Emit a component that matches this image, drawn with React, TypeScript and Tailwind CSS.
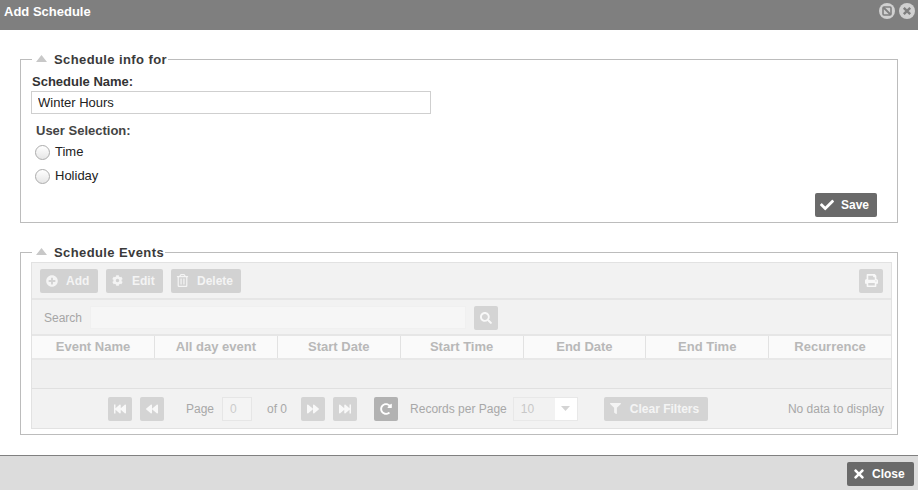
import React from "react";
import {
  FaCheck, FaPlusCircle, FaCog, FaRegTrashAlt, FaPrint, FaSearch, FaFastBackward, FaBackward,
  FaForward, FaFastForward, FaRedoAlt, FaFilter, FaTimes,
} from "react-icons/fa";

function Legend({ children }: { children: React.ReactNode }) {
  return (
    <legend className="ml-[11px] flex items-center pr-[1px] pl-[4px] h-[14px]">
      <svg width="11" height="7" viewBox="0 0 11 7" className="mr-[7px] mt-[-2px]"><path d="M5.5 0L11 7H0z" fill="#c8c8c8" /></svg>
      <span className="text-[13px] tracking-[0.4px] font-bold leading-[14px] text-[#3a3a3a] mt-[2px]">{children}</span>
    </legend>
  );
}

function ToolBtn({ icon, label, width }: { icon: React.ReactNode; label: string; width: string }) {
  return (
    <div className={`${width} h-[24px] rounded-[2px] bg-[#d2d2d2] flex items-center pl-[5px] text-[#f4f4f4]`}>
      <span className="w-[13px] flex justify-center">{icon}</span>
      <span className="ml-[8px] text-[12px] font-bold">{label}</span>
    </div>
  );
}

function PagerBtn({ children, dark }: { children: React.ReactNode; dark?: boolean }) {
  return (
    <div className={`w-[24px] h-[24px] rounded-[2px] flex items-center justify-center ${dark ? "bg-[#b2b2b2] text-white" : "bg-[#d4d4d4] text-[#f8f8f8]"}`}>
      {children}
    </div>
  );
}

const columns = ["Event Name", "All day event", "Start Date", "Start Time", "End Date", "End Time", "Recurrence"];

export default function App() {
  return (
    <div className="w-[918px] h-[490px] bg-white flex flex-col overflow-hidden font-['Liberation_Sans',Arial,sans-serif]">
      <header className="h-[30px] bg-[#7f7f7f] flex items-center justify-between pl-[4px] pr-[3px] pb-[8px] shrink-0">
        <span className="text-white text-[13px] font-bold leading-[16px] mt-[2px]">Add Schedule</span>
        <div className="flex items-center gap-[4px]">
          <svg width="16" height="16" viewBox="0 0 16 16">
            <circle cx="8" cy="8" r="8" fill="#d0d0d0" />
            <rect x="4" y="4" width="8" height="8" rx="1" fill="none" stroke="#7f7f7f" strokeWidth="1.6" />
            <path d="M4.5 4.5L11.5 11.5" stroke="#7f7f7f" strokeWidth="1.8" />
          </svg>
          <svg width="16" height="16" viewBox="0 0 16 16">
            <circle cx="8" cy="8" r="8" fill="#d0d0d0" />
            <path d="M4.8 4.8L11.2 11.2M11.2 4.8L4.8 11.2" stroke="#7f7f7f" strokeWidth="2.4" />
          </svg>
        </div>
      </header>

      <main className="flex-1 px-[20px] pt-[22px] min-h-0">
        <fieldset className="border border-[#bcbcbc] h-[171px] relative block">
          <Legend>Schedule info for</Legend>
          <div className="pl-[10px] pr-[20px]">
            <div className="pl-[1px] text-[13px] font-bold leading-[16px] text-[#333] mt-[8px] mb-[1px]">Schedule Name:</div>
            <input readOnly value="Winter Hours" className="w-[400px] h-[23px] border border-[#cfcfcf] pl-[6px] text-[13px] text-[#222] outline-none block" />
            <div className="pl-[5px] mt-[9px] text-[13px] font-bold leading-[16px] text-[#444]">User Selection:</div>
            <div className="pl-[4px] mt-[1px] flex items-center h-[24px]">
              <span className="w-[15px] h-[15px] rounded-full border border-[#ababab] bg-gradient-to-b from-[#ffffff] to-[#e6e6e6]" />
              <span className="ml-[5px] text-[13px] text-[#222]">Time</span>
            </div>
            <div className="pl-[4px] flex items-center h-[24px]">
              <span className="w-[15px] h-[15px] rounded-full border border-[#ababab] bg-gradient-to-b from-[#ffffff] to-[#e6e6e6]" />
              <span className="ml-[5px] text-[13px] text-[#222]">Holiday</span>
            </div>
            <div className="flex justify-end mt-[5px]">
              <div className="w-[62px] h-[24px] bg-[#6a6a6a] rounded-[2px] flex items-center pl-[5px] text-white">
                <FaCheck size={14} />
                <span className="ml-[7px] text-[12px] font-bold">Save</span>
              </div>
            </div>
          </div>
        </fieldset>

        <fieldset className="border border-[#bcbcbc] h-[190px] mt-[22px] block">
          <Legend>Schedule Events</Legend>
          <div className="ml-[10px] mr-[5px] mt-[3px] border border-[#e2e2e2] bg-[#f2f2f2] h-[167px] flex flex-col">
            <div className="h-[37px] flex items-center pl-[8px] pr-[8px] border-b-2 border-[#e6e6e6] shrink-0">
              <div className="flex gap-[8px]">
                <ToolBtn width="w-[58px]" label="Add" icon={<FaPlusCircle size={12} />} />
                <ToolBtn width="w-[57px]" label="Edit" icon={<FaCog size={11} />} />
                <ToolBtn width="w-[70px]" label="Delete" icon={<FaRegTrashAlt size={13} />} />
              </div>
              <div className="ml-auto">
                <PagerBtn><FaPrint size={13} /></PagerBtn>
              </div>
            </div>
            <div className="h-[36px] flex items-center pl-[12px] pt-[1px] border-b-2 border-[#e6e6e6] shrink-0">
              <span className="text-[12px] text-[#a6a6a6] w-[46px]">Search</span>
              <div className="w-[376px] h-[23px] bg-[#f6f6f6] border border-[#f0f0f0]" />
              <div className="ml-[8px]"><PagerBtn><FaSearch size={12} /></PagerBtn></div>
            </div>
            <div className="grid grid-cols-[122px_repeat(6,1fr)] h-[24px] bg-[#fafafa] border-b-2 border-[#e8e8e8] shrink-0">
              {columns.map((c, i) => (
                <div key={c} className={`flex items-center justify-center text-[13px] font-bold text-[#b8b8b8] ${i > 0 ? "border-l border-[#e2e2e2]" : ""}`}>{c}</div>
              ))}
            </div>
            <div className="h-[29px] bg-[#f0f0f0] border-b border-[#e0e0e0] shrink-0" />
            <div className="flex-1 flex items-center text-[12px] text-[#a8a8a8] pl-[76px] pr-[7px]">
              <div className="flex gap-[8px]">
                <PagerBtn><FaFastBackward size={12} /></PagerBtn>
                <PagerBtn><FaBackward size={12} /></PagerBtn>
              </div>
              <span className="ml-[22px]">Page</span>
              <div className="ml-[8px] w-[30px] h-[24px] border border-[#e6e6e6] bg-[#f4f4f4] flex items-center pl-[7px] text-[#cccccc]">0</div>
              <span className="ml-[15px]">of 0</span>
              <div className="ml-[14px] flex gap-[8px]">
                <PagerBtn><FaForward size={12} /></PagerBtn>
                <PagerBtn><FaFastForward size={12} /></PagerBtn>
              </div>
              <div className="ml-[17px]"><PagerBtn dark><FaRedoAlt size={12} /></PagerBtn></div>
              <span className="ml-[12px]">Records per Page</span>
              <div className="ml-[6px] w-[65px] h-[24px] border border-[#e8e8e8] flex">
                <div className="w-[41px] bg-[#f2f2f2] flex items-center pl-[7px] text-[#c8c8c8]">10</div>
                <div className="flex-1 bg-white flex items-center justify-center">
                  <svg width="9" height="5" viewBox="0 0 9 5"><path d="M0 0h9L4.5 5z" fill="#d4d4d4" /></svg>
                </div>
              </div>
              <div className="ml-[26px] w-[104px] h-[24px] rounded-[2px] bg-[#d4d4d4] text-[#f4f4f4] flex items-center pl-[6px]">
                <FaFilter size={11} />
                <span className="ml-[9px] font-bold">Clear Filters</span>
              </div>
              <span className="ml-auto">No data to display</span>
            </div>
          </div>
        </fieldset>
      </main>

      <footer className="h-[35px] bg-[#dcdcdc] border-t border-[#808080] flex items-center justify-end pr-[4px] pt-[1px] shrink-0">
        <div className="w-[67px] h-[24px] bg-[#6a6a6a] rounded-[2px] flex items-center pl-[5px] text-white">
          <FaTimes size={14} />
          <span className="ml-[6px] text-[12px] font-bold">Close</span>
        </div>
      </footer>
    </div>
  );
}
